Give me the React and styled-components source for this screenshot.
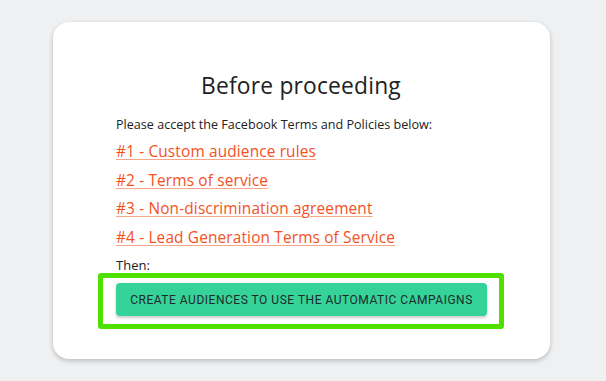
import React from "react";
import styled, { createGlobalStyle } from "styled-components";

const GlobalStyle = createGlobalStyle`
  html, body {
    margin: 0;
    padding: 0;
    background: #eff0f2;
  }
  body {
    font-family: "Open Sans", "Liberation Sans", sans-serif;
    color: #222;
  }
`;

const Page = styled.div`
  padding: 22px 0 22px 53px;
`;

const Card = styled.div`
  width: 497px;
  box-sizing: border-box;
  background: #fff;
  border-radius: 16px;
  box-shadow: 0 2px 5px rgba(0, 0, 0, 0.22);
  padding: 49px 46px 30px 45px;
`;

const Title = styled.h2`
  margin: 0;
  font-size: 22.8px;
  line-height: 30px;
  font-weight: 400;
  text-align: center;
  color: #222;
  letter-spacing: 0.2px;
`;

const Intro = styled.p`
  margin: 14px 0 0;
  padding-left: 18px;
  font-size: 12.6px;
  line-height: 20px;
  color: #222;
`;

const LinkList = styled.div`
  margin-top: 7px;
  padding-left: 18px;
  display: flex;
  flex-direction: column;
  gap: 8.7px;
`;

const TermLink = styled.a`
  align-self: flex-start;
  font-size: 15.4px;
  line-height: 20px;
  letter-spacing: 0.15px;
  color: #f4511e;
  text-decoration: underline;
  text-decoration-color: #f9a58a;
  text-underline-offset: 2px;
  cursor: pointer;
`;

const Then = styled.div`
  margin-top: 10px;
  padding-left: 18px;
  font-size: 13px;
  line-height: 15px;
  color: #222;
`;

const Highlight = styled.div`
  border: 5px solid #4fe000;
  border-radius: 3px;
  padding: 5px 12px 8px 13px;
`;

const ActionButton = styled.button`
  width: 100%;
  height: 33px;
  border: none;
  border-radius: 4px;
  background: #35d399;
  color: #1e2a2a;
  font-family: "Roboto", "Liberation Sans", sans-serif;
  font-size: 12px;
  letter-spacing: 0.52px;
  text-transform: uppercase;
  box-shadow: 0 2px 3px rgba(0, 0, 0, 0.2);
  cursor: pointer;
`;

const terms = [
  "#1 - Custom audience rules",
  "#2 - Terms of service",
  "#3 - Non-discrimination agreement",
  "#4 - Lead Generation Terms of Service",
];

export default function App() {
  return (
    <>
      <GlobalStyle />
      <Page>
        <Card>
          <Title>Before proceeding</Title>
          <Intro>Please accept the Facebook Terms and Policies below:</Intro>
          <LinkList>
            {terms.map((t) => (
              <TermLink key={t}>{t}</TermLink>
            ))}
          </LinkList>
          <Then>Then:</Then>
          <Highlight>
            <ActionButton>Create audiences to use the automatic campaigns</ActionButton>
          </Highlight>
        </Card>
      </Page>
    </>
  );
}
